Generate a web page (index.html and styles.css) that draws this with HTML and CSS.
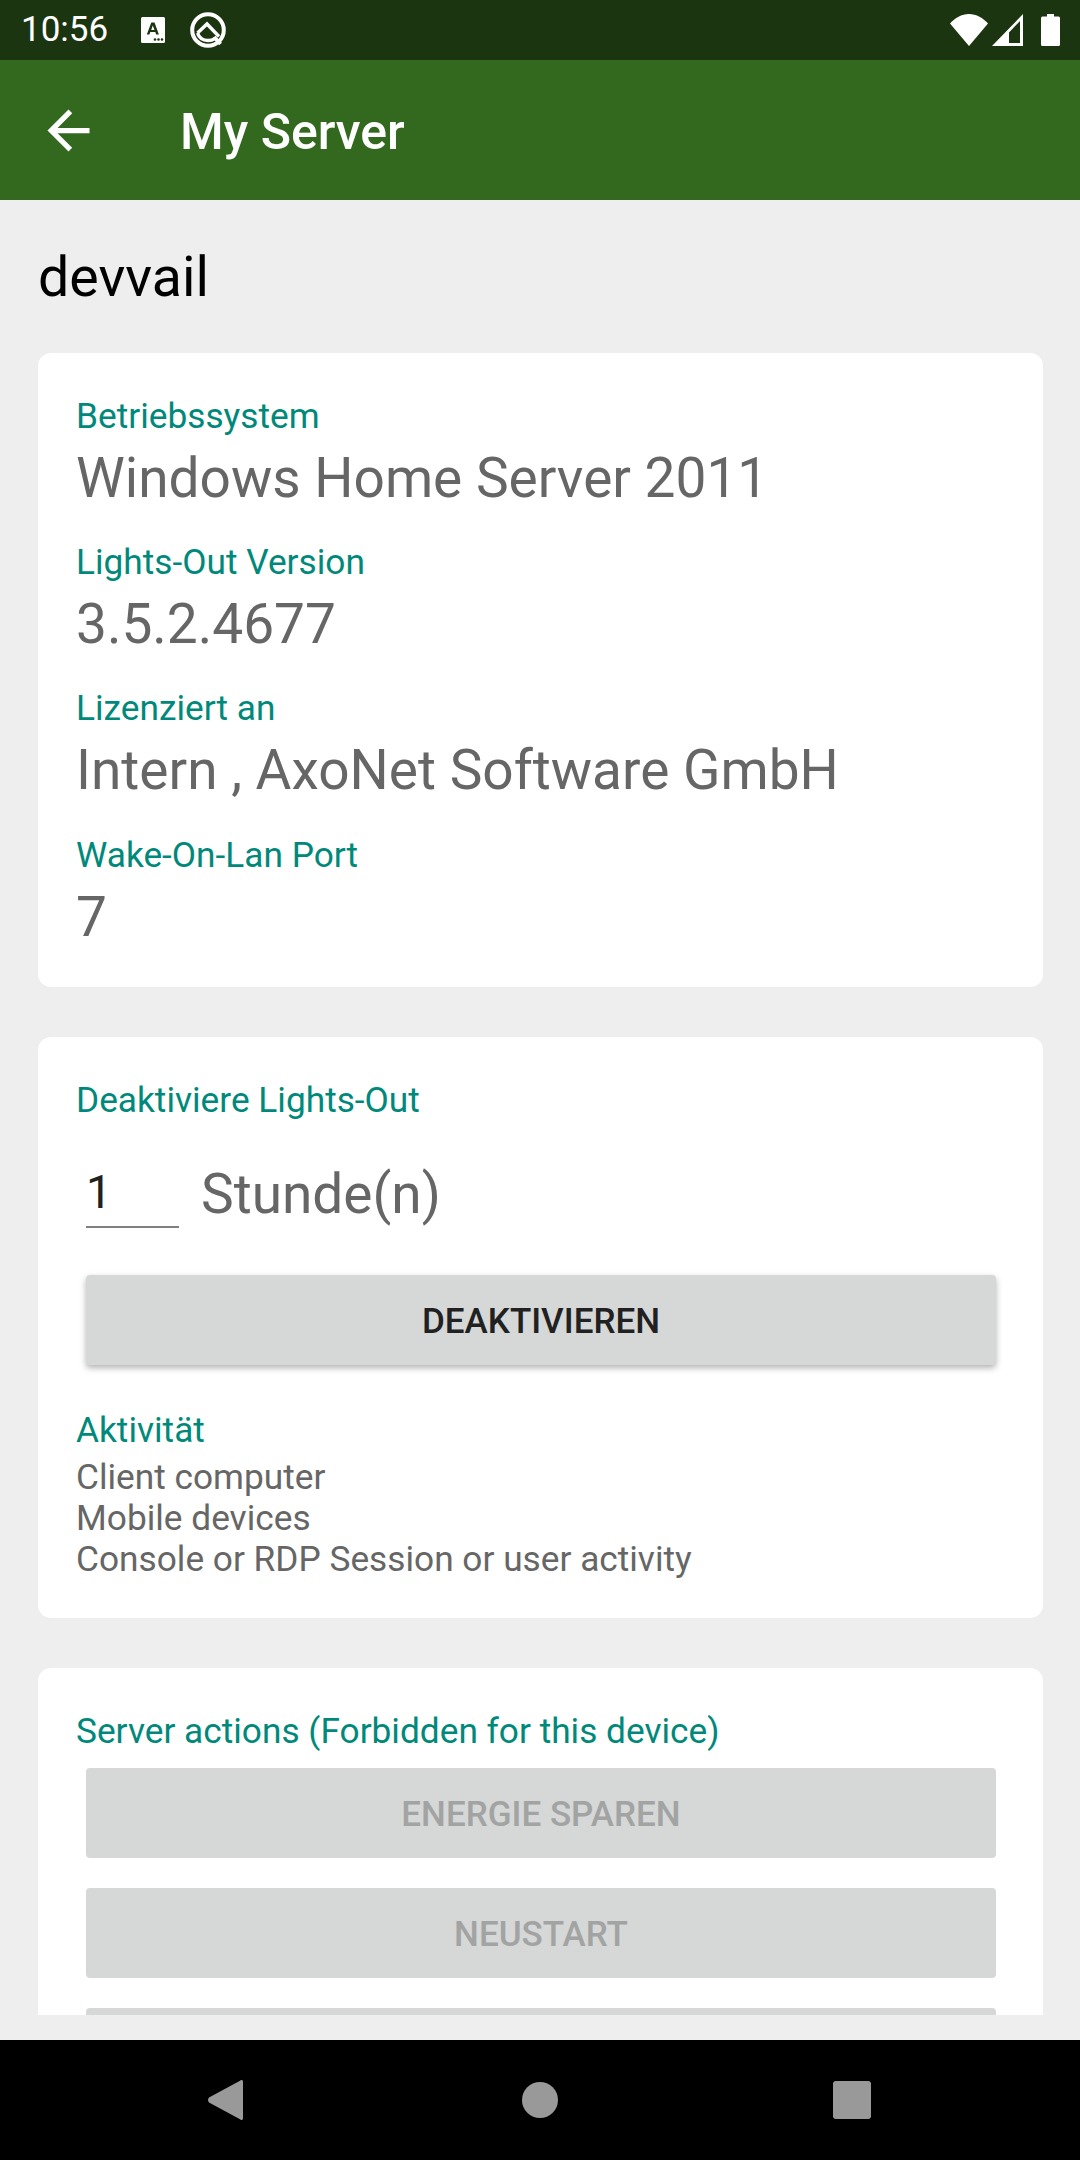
FILE: index.html
```html
<!DOCTYPE html>
<html lang="de">
<head>
<meta charset="utf-8">
<title>My Server</title>
<link rel="stylesheet" href="styles.css">
</head>
<body>
<div class="screen">
  <header class="status">
    <span class="clock">10:56</span>
    <svg class="ic-a" viewBox="0 0 24 26"><path fill="#fff" fill-rule="evenodd" d="M1.500 0h21A1.500 1.500 0 0 1 24 1.500v23a1.500 1.500 0 0 1-1.500 1.500h-21A1.500 1.500 0 0 1 0 24.500v-23A1.500 1.500 0 0 1 1.500 0zM10.300 5.500 5.800 17.500h2.600l.9-2.600h5l.9 2.600h2.700L13.500 5.500zM11.800 8.500l1.700 4.400h-3.300z"/><g fill="#1b3510"><circle cx="14" cy="22.500" r="1.300"/><circle cx="17.500" cy="22.500" r="1.300"/><circle cx="21" cy="22.500" r="1.300"/></g></svg>
    <svg class="ic-q" viewBox="0 0 36 36"><circle cx="18" cy="18" r="15.800" fill="none" stroke="#fff" stroke-width="4"/><g fill="none" stroke="#fff" stroke-width="3.400"><path d="M7.500 21 17 12l12 12.500"/><path d="M7.500 21c1.500 4.500 5.500 7.500 10.500 7.500 2.500 0 5-.7 7-2.200"/></g><path d="M24 25l6.500 7" fill="none" stroke="#fff" stroke-width="4"/></svg>
    <span class="status-gap"></span>
    <svg class="ic-wifi" viewBox="0 0 38 32"><path fill="#fff" d="M19 32 0 9.500C5 4 11.500 0 19 0s14 4 19 9.500z"/></svg>
    <svg class="ic-signal" viewBox="0 0 31 32"><path fill="#fff" fill-rule="evenodd" d="M31 0v32H0zM28 7 17 18.500V29h11z"/></svg>
    <svg class="ic-batt" viewBox="0 0 19 32"><path fill="#fff" d="M6 0h7v2.500h4.500A1.500 1.500 0 0 1 19 4v26.500a1.500 1.500 0 0 1-1.500 1.500h-16A1.500 1.500 0 0 1 0 30.500V4a1.500 1.500 0 0 1 1.500-1.500H6z"/></svg>
  </header>

  <div class="appbar">
    <svg class="ic-back" viewBox="0 0 24 24"><path fill="#fff" d="M20 11H7.830l5.590-5.590L12 4l-8 8 8 8 1.410-1.410L7.830 13H20v-2z"/></svg>
    <h1 class="appbar-title">My Server</h1>
  </div>

  <main class="content">
    <h2 class="server-name">devvail</h2>

    <section class="card card-info">
      <div class="label">Betriebssystem</div>
      <div class="value">Windows Home Server 2011</div>
      <div class="label">Lights-Out Version</div>
      <div class="value">3.5.2.4677</div>
      <div class="label">Lizenziert an</div>
      <div class="value value-third">Intern , AxoNet Software GmbH</div>
      <div class="label">Wake-On-Lan Port</div>
      <div class="value">7</div>
    </section>

    <section class="card card-disable">
      <div class="label">Deaktiviere Lights-Out</div>
      <div class="hours">
        <span class="hours-input">1</span>
        <span class="hours-unit">Stunde(n)</span>
      </div>
      <button class="btn btn-raised">DEAKTIVIEREN</button>
      <div class="label label-activity">Aktivität</div>
      <div class="activity">Client computer</div>
      <div class="activity">Mobile devices</div>
      <div class="activity">Console or RDP Session or user activity</div>
    </section>

    <section class="card card-actions">
      <div class="label">Server actions (Forbidden for this device)</div>
      <button class="btn btn-disabled">ENERGIE SPAREN</button>
      <button class="btn btn-disabled">NEUSTART</button>
      <div class="btn btn-disabled"></div>
    </section>
  </main>

  <footer class="navbar">
    <svg class="nav-back" viewBox="0 0 35 40"><path fill="#999" d="M32 .8c1.300-1.500 3-.8 3 1v36.400c0 1.800-1.700 2.500-3 1L1 22.500c-1.300-1.500-1.300-3.500 0-5z"/></svg>
    <span class="nav-home"></span>
    <span class="nav-recent"></span>
  </footer>
</div>
</body>
</html>
```
FILE: styles.css
```css
* { box-sizing: border-box; }
html, body { margin: 0; padding: 0; }
body { font-family: Roboto, "Liberation Sans", sans-serif; background: #eeeeee; }
.screen { width: 1080px; height: 2160px; display: flex; flex-direction: column; overflow: hidden; }

.status { height: 60px; flex: none; background: #1b3510; display: flex; align-items: center; padding: 0 20px 0 21px; color: #fff; }
.clock { font-size: 35px; line-height: 60px; width: 120px; }
.ic-a { width: 24px; height: 26px; margin-right: 25px; }
.ic-q { width: 36px; height: 36px; }
.status-gap { flex: 1; }
.ic-wifi { width: 38px; height: 32px; margin-right: 4px; }
.ic-signal { width: 31px; height: 32px; margin-right: 18px; }
.ic-batt { width: 19px; height: 32px; }

.appbar { height: 140px; flex: none; background: #33691e; display: flex; align-items: center; padding-left: 37px; }
.ic-back { width: 63px; height: 63px; }
.appbar-title { margin: 3px 0 0 80px; font-size: 50px; font-weight: 500; color: #fff; }

.content { height: 1815px; flex: none; padding: 0 37px 0 38px; overflow: hidden; }
.server-name { margin: 47px 0 0; font-size: 55.500px; line-height: 62px; font-weight: 400; color: #000; }

.card { background: #fff; border-radius: 13px; padding: 40px 38px 0; }
.card-info { margin-top: 44px; height: 634px; }
.card-disable { margin-top: 50px; height: 581px; }
.card-actions { margin-top: 50px; height: 420px; }

.label { font-size: 35.250px; line-height: 46px; color: #00897b; }
.value { font-size: 55px; line-height: 78px; color: #666666; margin-bottom: 22px; }
.value-third { margin-bottom: 23px; }

.hours { display: flex; align-items: flex-start; margin: 34px 0 0 10px; height: 118px; }
.hours-input { width: 93px; height: 71px; font-size: 46px; line-height: 70px; color: #212121; border-bottom: 2px solid #808080; }
.hours-unit { font-size: 55px; line-height: 74px; color: #666666; margin-left: 22px; }

.btn { display: block; width: 910px; height: 90px; margin: 0 0 0 10px; padding: 2px 0 0; border: 0; border-radius: 4px; background: #d6d7d7; font-family: inherit; font-size: 35px; font-weight: 500; text-align: center; }
.btn-raised { color: #212121; box-shadow: 0 3px 6px rgba(0, 0, 0, 0.3); }
.btn-disabled { color: #a2a3a3; margin-bottom: 30px; }

.label-activity { margin-top: 42px; margin-bottom: 4px; }
.activity { font-size: 35.250px; line-height: 41px; color: #666666; }
.card-actions .label { margin-bottom: 14px; }

.navbar { height: 120px; margin-top: 25px; flex: none; background: #000; position: relative; }
.nav-back { position: absolute; left: 208px; top: 40px; width: 35px; height: 40px; }
.nav-home { position: absolute; left: 522px; top: 42px; width: 36px; height: 36px; border-radius: 50%; background: #999; }
.nav-recent { position: absolute; left: 833px; top: 41px; width: 38px; height: 38px; border-radius: 3px; background: #999; }
```
